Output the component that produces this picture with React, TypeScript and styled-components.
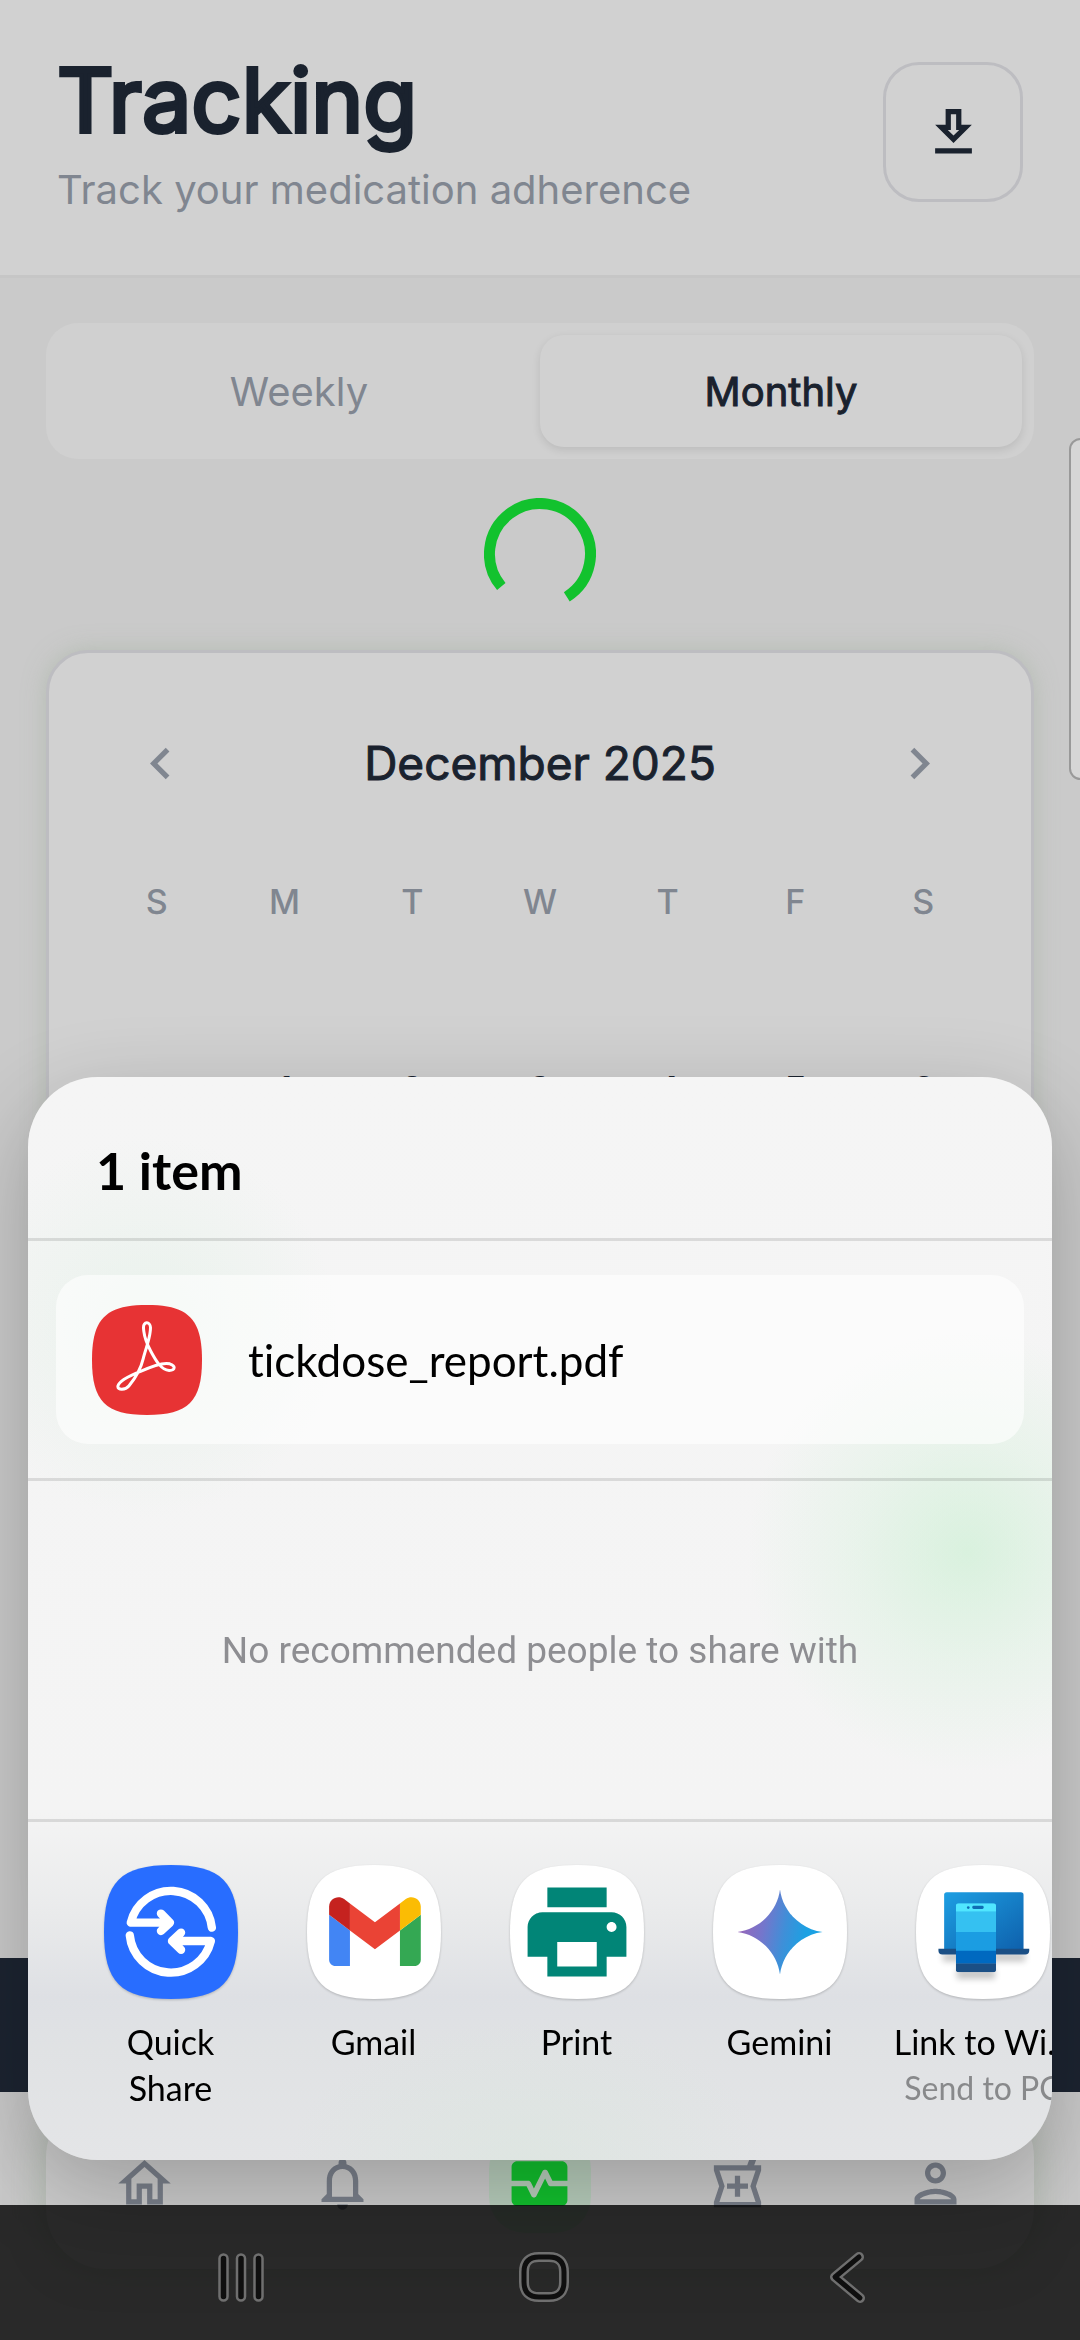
import React from "react";
import styled, { createGlobalStyle } from "styled-components";
import {
  MdChevronLeft,
  MdChevronRight,
  MdMonitorHeart,
  MdOutlineHome,
  MdOutlineLocalPharmacy,
  MdOutlineNotifications,
  MdOutlinePerson,
  MdPrint,
} from "react-icons/md";

const ink = "#1a222e";
const muted = "#808690";
const surface = "#d1d1d1";
const line = "#bdbdc1";

const GlobalStyle = createGlobalStyle`
  * { box-sizing: border-box; }
  body { margin: 0; background: #cacaca; font-family: Inter, sans-serif; }
  button { font: inherit; color: inherit; border: 0; padding: 0; background: none; cursor: pointer; }
  h1, h2, p { margin: 0; }
  svg { display: block; }
`;

const Page = styled.div`
  min-height: 100vh;
  display: flex;
  flex-direction: column;
  background: #cacaca;
  color: ${ink};
`;

const Header = styled.header`
  display: flex;
  justify-content: space-between;
  align-items: flex-start;
  padding: 42px 57px 61px;
  background: ${surface};
  border-bottom: 3px solid #c6c6c6;
`;

const Title = styled.h1`
  font-size: 88px;
  line-height: 116px;
  font-weight: 400;
  -webkit-text-stroke: 4px ${ink};
`;

const Subtitle = styled.p`
  font-size: 40px;
  line-height: 48px;
  margin-top: 8px;
  color: ${muted};
`;

const DownloadButton = styled.button`
  width: 140px;
  height: 140px;
  margin-top: 20px;
  display: grid;
  place-items: center;
  border: 3px solid ${line};
  border-radius: 36px;
`;

const Main = styled.main`
  flex: 1;
  display: flex;
  flex-direction: column;
  padding: 45px 46px 40px;
`;

const Segments = styled.div`
  display: grid;
  grid-template-columns: 1fr 1fr;
  height: 136px;
  padding: 12px;
  border-radius: 32px;
  background: #d0d0d0;
`;

const Segment = styled.button<{ $active?: boolean }>`
  border-radius: 24px;
  font-size: 40px;
  font-weight: 400;
  -webkit-text-stroke: ${(p) => (p.$active ? `1px ${ink}` : "0")};
  color: ${(p) => (p.$active ? ink : muted)};
  background: ${(p) => (p.$active ? surface : "transparent")};
  box-shadow: ${(p) => (p.$active ? "0 3px 8px rgba(0, 0, 0, 0.1)" : "none")};
`;

const Loader = styled.div`
  display: flex;
  justify-content: center;
  padding: 39px 0 40px;
`;

const Card = styled.section`
  flex: 1;
  padding: 76px 44px;
  background: ${surface};
  border: 3px solid ${line};
  border-radius: 42px;
  box-shadow: 0 0 22px rgba(160, 175, 155, 0.5);
`;

const MonthRow = styled.div`
  display: flex;
  justify-content: space-between;
  align-items: center;
  padding: 0 36px;
  height: 68px;
`;

const MonthName = styled.h2`
  font-size: 46px;
  line-height: 68px;
  font-weight: 400;
  -webkit-text-stroke: 1px ${ink};
`;

const ArrowButton = styled.button`
  color: ${muted};
`;

const Calendar = styled.table`
  width: 100%;
  margin-top: 78px;
  table-layout: fixed;
  border-collapse: collapse;
  text-align: center;

  th {
    height: 52px;
    padding: 0;
    font-size: 34px;
    font-weight: 500;
    color: ${muted};
  }

  td {
    height: 300px;
    padding: 26px 0 0;
    font-size: 38px;
    font-weight: 500;
  }
`;

const Banner = styled.div`
  height: 134px;
  background: #1c2431;
`;

const TabBar = styled.nav`
  display: grid;
  grid-template-columns: repeat(5, 1fr);
  align-items: center;
  height: 172px;
  margin: 5px 46px 71px;
  border-radius: 60px;
  background: #cdcdcd;
  box-shadow: 0 0 36px rgba(150, 170, 145, 0.5);
  color: #7b818c;
`;

const Tab = styled.button<{ $active?: boolean }>`
  justify-self: center;
  width: 102px;
  height: 100px;
  display: grid;
  place-items: center;
  border-radius: 36px;
  color: ${(p) => (p.$active ? "#12c22e" : "inherit")};
  background: ${(p) => (p.$active ? "#b9cfbd" : "transparent")};
`;

const EdgeHandle = styled.div`
  position: fixed;
  top: 438px;
  right: -12px;
  width: 23px;
  height: 342px;
  border: 2px solid #999999;
  border-radius: 14px;
  background: #d6d6d6;
`;

const Sheet = styled.section`
  position: fixed;
  left: 28px;
  right: 28px;
  bottom: 180px;
  overflow: hidden;
  border-radius: 70px;
  color: #000000;
  font-family: Lato, sans-serif;
  font-variant-ligatures: none;
  background:
    radial-gradient(circle at 940px 475px, rgba(190, 238, 200, 0.5), rgba(190, 238, 200, 0.22) 110px, transparent 220px),
    radial-gradient(circle at 120px 250px, rgba(215, 238, 222, 0.4), transparent 190px),
    radial-gradient(ellipse 240px 140px at 500px 1083px, rgba(216, 230, 220, 0.5), transparent),
    linear-gradient(#f5f5f5 0, #f4f4f4 735px, #e9eaeb 840px, #dee0e4 920px, #e0e2e4 970px, #e4e5e7 1083px);
`;

const SheetShadow = styled.div`
  position: fixed;
  left: 28px;
  right: 28px;
  bottom: 180px;
  height: 1083px;
  border-radius: 70px;
  box-shadow: 0 30px 90px rgba(0, 0, 0, 0.24);
`;

const SheetHeader = styled.header`
  padding: 61px 68px 36px;
`;

const SheetTitle = styled.h2`
  font-size: 52px;
  line-height: 64px;
  font-weight: 700;
`;

const SheetSection = styled.div`
  border-top: 3px solid rgba(0, 0, 0, 0.11);
`;

const FileArea = styled(SheetSection)`
  padding: 34px 28px;
`;

const FileRow = styled.div`
  display: flex;
  align-items: center;
  gap: 46px;
  height: 169px;
  padding: 0 36px;
  border-radius: 32px;
  background: rgba(255, 255, 255, 0.6);
  font-size: 44px;
`;

const PeopleArea = styled(SheetSection)`
  display: grid;
  place-items: center;
  height: 341px;
  font-family: Roboto, sans-serif;
  font-size: 37px;
  color: #8e8e92;
`;

const AppList = styled(SheetSection)`
  display: flex;
  align-items: flex-start;
  height: 341px;
  padding: 43px 0 0 41px;
`;

const AppButton = styled.button`
  flex: 0 0 203px;
  display: flex;
  flex-direction: column;
  align-items: center;
`;

const AppName = styled.span<{ $singleLine?: boolean }>`
  max-width: ${(p) => (p.$singleLine ? "none" : "168px")};
  white-space: ${(p) => (p.$singleLine ? "nowrap" : "normal")};
  margin-top: 20px;
  font-size: 34px;
  line-height: 46px;
`;

const AppNote = styled.span`
  font-size: 32px;
  line-height: 46px;
  white-space: nowrap;
  color: #88898b;
`;

const SystemBar = styled.nav`
  position: fixed;
  left: 0;
  right: 0;
  bottom: 0;
  height: 135px;
  display: grid;
  grid-template-columns: repeat(3, 1fr);
  place-items: center;
  padding: 8px 82px 0 90px;
  background: rgba(0, 0, 0, 0.8);
`;

const AppSvg = styled.svg`
  width: 134px;
  height: 134px;
  overflow: visible;
  filter: drop-shadow(0 1px 1px rgba(0, 0, 0, 0.2));
`;

const SQUIRCLE =
  "M200 0C350 0 400 50 400 200S350 400 200 400 0 350 0 200 50 0 200 0Z";

function AppIcon({ fill = "#ffffff", children }: { fill?: string; children: React.ReactNode }) {
  return (
    <AppSvg viewBox="0 0 400 400" aria-hidden="true">
      <path d={SQUIRCLE} fill={fill} />
      {children}
    </AppSvg>
  );
}

function QuickShareIcon() {
  return (
    <AppIcon fill="#286dff">
      <g fill="none" stroke="#ffffff" strokeWidth="25" strokeLinecap="round" strokeLinejoin="round">
        <path d="M322 187A123 123 0 0 0 80 172H192M170 145L197 172L170 197" />
        <path d="M77 210A123 123 0 0 0 319 227H206M230 202L203 227L230 253" />
      </g>
    </AppIcon>
  );
}

function GmailIcon() {
  return (
    <AppIcon>
      <g transform="translate(66 96) scale(3.11) translate(-52 -42)">
        <path fill="#4285f4" d="M58 108h14V74L52 59v43c0 3.32 2.69 6 6 6" />
        <path fill="#34a853" d="M120 108h14c3.32 0 6-2.69 6-6V59l-20 15" />
        <path fill="#fbbc04" d="M120 48v26l20-15v-8c0-7.42-8.47-11.65-14.4-7.2" />
        <path fill="#ea4335" d="M72 74V48l24 18 24-18v26L96 92" />
        <path fill="#c5221f" d="M52 51v8l20 15V48l-5.6-4.2c-5.94-4.45-14.4-.22-14.4 7.2" />
      </g>
    </AppIcon>
  );
}

function PrintIcon() {
  return (
    <AppIcon>
      <MdPrint x={23} y={23} size={354} color="#018577" />
    </AppIcon>
  );
}

function GeminiIcon() {
  return (
    <AppIcon>
      <defs>
        <linearGradient id="gemini" x1="0" y1="0.4" x2="1" y2="0.6">
          <stop offset="0" stopColor="#9b66b8" />
          <stop offset="0.3" stopColor="#7476cc" />
          <stop offset="0.55" stopColor="#3f8fd8" />
          <stop offset="0.8" stopColor="#1ba1e3" />
        </linearGradient>
      </defs>
      <path
        fill="url(#gemini)"
        d="M200 73C208 138 262 192 327 200C262 208 208 262 200 327C192 262 138 208 73 200C138 192 192 138 200 73Z"
      />
    </AppIcon>
  );
}

function LinkIcon() {
  return (
    <AppIcon>
      <defs>
        <linearGradient id="laptop" x1="0" y1="0" x2="1" y2="1">
          <stop offset="0" stopColor="#1d9fe3" />
          <stop offset="1" stopColor="#0e5fab" />
        </linearGradient>
        <clipPath id="phone">
          <rect x="119" y="114" width="120" height="206" rx="8" />
        </clipPath>
        <filter id="soft" x="-20%" y="-60%" width="140%" height="260%">
          <feGaussianBlur stdDeviation="9" />
        </filter>
      </defs>
      <path d="M80 262H326V288H80ZM122 310H236V340H122Z" fill="#000000" opacity="0.22" filter="url(#soft)" />
      <rect x="84" y="81" width="237" height="178" rx="8" fill="url(#laptop)" />
      <path d="M67 250H338V256Q338 267 326 267H79Q67 267 67 256Z" fill="#1b4f85" />
      <g clipPath="url(#phone)">
        <rect x="119" y="114" width="120" height="26" fill="#50e6ff" />
        <rect x="119" y="139" width="120" height="62" fill="#35c1f1" />
        <rect x="119" y="200" width="120" height="57" fill="#1b9de2" />
        <rect x="119" y="256" width="120" height="39" fill="#0069c0" />
        <rect x="119" y="294" width="120" height="26" fill="#1b4f85" />
      </g>
      <circle cx="156" cy="127" r="4" fill="#0f6db5" />
      <rect x="168" y="122" width="34" height="9" rx="4" fill="#0f6db5" />
    </AppIcon>
  );
}

function PdfIcon() {
  return (
    <svg width="110" height="110" viewBox="0 0 400 400" aria-hidden="true">
      <path d={SQUIRCLE} fill="#e73334" />
      <path
        transform="scale(1.208) translate(-34 -43)"
        fill="none"
        stroke="#ffffff"
        strokeWidth="9"
        strokeLinejoin="round"
        d="M189 112C190 135 198 158 211 182C225 208 242 239 266 240C286 239 286 226 268 220C246 214 208 230 180 243C150 255 115 272 112 287C110 301 135 299 145 287C165 262 180 240 188 205C195 175 211 140 210 110C209 92 188 92 189 112Z"
      />
    </svg>
  );
}

function DownloadIcon() {
  return (
    <svg width="63" height="63" viewBox="0 0 24 24" fill="currentColor" aria-hidden="true">
      <path
        fillRule="evenodd"
        d="M19 9h-4V3H9v6H5l7 7 7-7zm-8 2V5h2v6h1.17L12 13.17 9.83 11H11zM5 18h14v2H5z"
      />
    </svg>
  );
}

function Spinner() {
  return (
    <svg width="112" height="112" viewBox="0 0 112 112" role="img" aria-label="Loading">
      <path d="M17.3 88.5A50.5 50.5 0 1 1 82.8 98.8" fill="none" stroke="#12c22e" strokeWidth="11" />
    </svg>
  );
}

function Outlined({ d }: { d: string }) {
  return (
    <svg width="52" height="52" viewBox="0 0 52 52" fill="none" strokeLinecap="round" strokeLinejoin="round" aria-hidden="true">
      <path d={d} stroke="#6f6f6f" strokeWidth="10" />
      <path d={d} stroke="#0f0f0f" strokeWidth="5" />
    </svg>
  );
}

const apps = [
  { name: "Quick Share", icon: <QuickShareIcon /> },
  { name: "Gmail", icon: <GmailIcon /> },
  { name: "Print", icon: <PrintIcon /> },
  { name: "Gemini", icon: <GeminiIcon /> },
  { name: "Link to Wi...", note: "Send to PC", icon: <LinkIcon /> },
];

const weekdays = ["S", "M", "T", "W", "T", "F", "S"];
const firstWeek = ["", "1", "2", "3", "4", "5", "6"];

export default function App() {
  return (
    <>
      <GlobalStyle />
      <Page>
        <Header>
          <div>
            <Title>Tracking</Title>
            <Subtitle>Track your medication adherence</Subtitle>
          </div>
          <DownloadButton aria-label="Download report">
            <DownloadIcon />
          </DownloadButton>
        </Header>
        <Main>
          <Segments>
            <Segment>Weekly</Segment>
            <Segment $active>Monthly</Segment>
          </Segments>
          <Loader>
            <Spinner />
          </Loader>
          <Card>
            <MonthRow>
              <ArrowButton aria-label="Previous month">
                <MdChevronLeft size={63} />
              </ArrowButton>
              <MonthName>December 2025</MonthName>
              <ArrowButton aria-label="Next month">
                <MdChevronRight size={63} />
              </ArrowButton>
            </MonthRow>
            <Calendar>
              <thead>
                <tr>
                  {weekdays.map((day, i) => (
                    <th key={i} scope="col">{day}</th>
                  ))}
                </tr>
              </thead>
              <tbody>
                <tr>
                  {firstWeek.map((day, i) => (
                    <td key={i}>{day}</td>
                  ))}
                </tr>
              </tbody>
            </Calendar>
          </Card>
        </Main>
        <Banner />
        <TabBar aria-label="Main">
          <Tab aria-label="Home"><MdOutlineHome size={63} /></Tab>
          <Tab aria-label="Reminders"><MdOutlineNotifications size={63} /></Tab>
          <Tab aria-label="Tracking" $active><MdMonitorHeart size={67} /></Tab>
          <Tab aria-label="Pharmacy"><MdOutlineLocalPharmacy size={63} /></Tab>
          <Tab aria-label="Profile"><MdOutlinePerson size={63} /></Tab>
        </TabBar>
      </Page>

      <EdgeHandle />
      <SheetShadow />
      <Sheet role="dialog" aria-label="Share">
        <SheetHeader>
          <SheetTitle>1 item</SheetTitle>
        </SheetHeader>
        <FileArea>
          <FileRow>
            <PdfIcon />
            <span>tickdose_report.pdf</span>
          </FileRow>
        </FileArea>
        <PeopleArea>
          <p>No recommended people to share with</p>
        </PeopleArea>
        <AppList>
          {apps.map((app) => (
            <AppButton key={app.name}>
              {app.icon}
              <AppName $singleLine={Boolean(app.note)}>{app.name}</AppName>
              {app.note && <AppNote>{app.note}</AppNote>}
            </AppButton>
          ))}
        </AppList>
      </Sheet>

      <SystemBar aria-label="System">
        <button aria-label="Recent apps">
          <svg width="52" height="52" viewBox="0 0 52 52" fill="#0f0f0f" stroke="#6f6f6f" strokeWidth="2.5" aria-hidden="true">
            <rect x="4.5" y="3.5" width="8" height="46" rx="4" />
            <rect x="22" y="3.5" width="8" height="46" rx="4" />
            <rect x="39.5" y="3.5" width="8" height="46" rx="4" />
          </svg>
        </button>
        <button aria-label="Home">
          <Outlined d="M21 6H31Q46 6 46 21V31Q46 46 31 46H21Q6 46 6 31V21Q6 6 21 6Z" />
        </button>
        <button aria-label="Back">
          <Outlined d="M38 6L14 26L39 47" />
        </button>
      </SystemBar>
    </>
  );
}
